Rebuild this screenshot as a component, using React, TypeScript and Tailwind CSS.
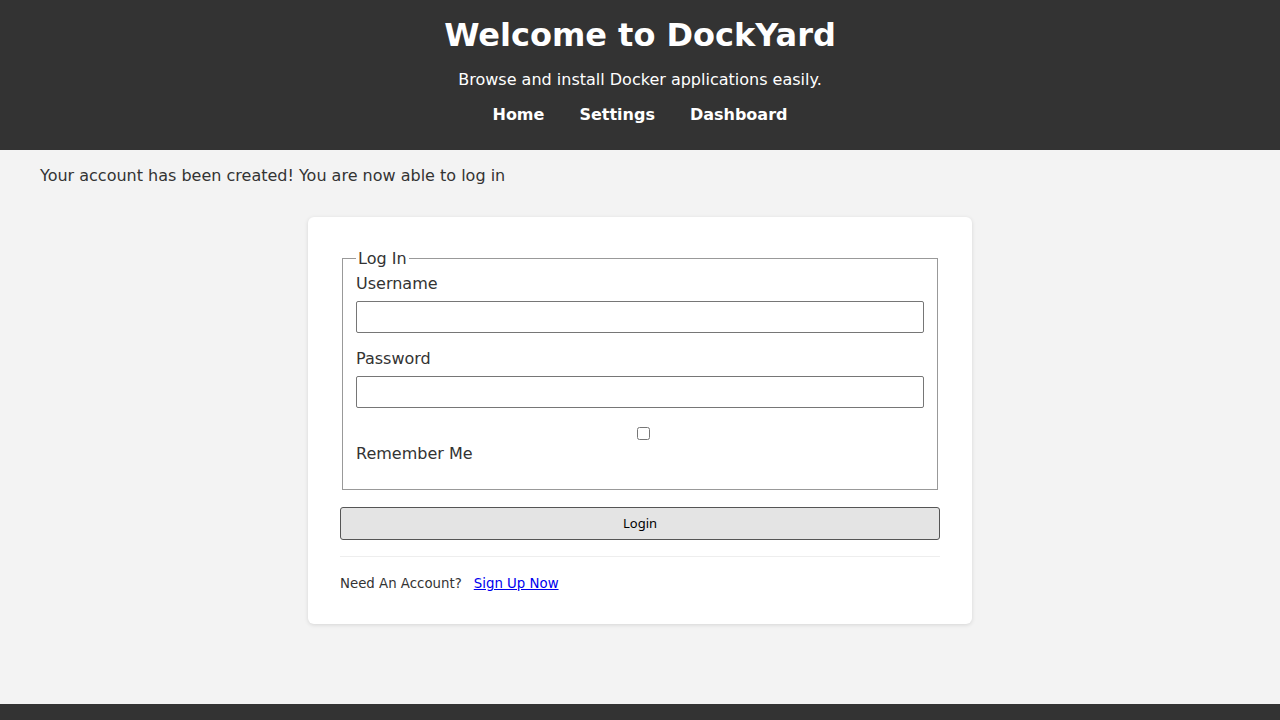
export default function App() {
  return (
    <div className="min-h-screen bg-[#f3f3f3] text-[#333] font-['DejaVu_Sans',sans-serif]">
      <header className="bg-[#333] text-white text-center pt-4 pb-[23px]">
        <h1 className="text-[32px] leading-[38px] font-bold">Welcome to DockYard</h1>
        <p className="mt-[14px] text-base leading-6">Browse and install Docker applications easily.</p>
        <nav className="mt-[11px] flex justify-center gap-[35px] text-base leading-6 font-bold">
          <a href="#">Home</a>
          <a href="#">Settings</a>
          <a href="#">Dashboard</a>
        </nav>
      </header>

      <main className="min-h-[554px] px-10 pt-[14px]">
        <p className="text-base leading-6">Your account has been created! You are now able to log in</p>

        <div className="mx-auto mt-[29px] w-[664px] bg-white rounded-md shadow-[0_1px_4px_rgba(0,0,0,0.12)] p-8">
          <form>
            <fieldset className="mx-[2px] border border-[#999] px-[13px] pb-[23px]">
              <legend className="px-[2px] text-base leading-[19px]">Log In</legend>
              <label className="block text-base leading-6 mt-[4px]">Username</label>
              <input type="text" className="mt-[5px] block w-full h-8 border border-[#767676] rounded-[2px]" />
              <label className="block text-base leading-6 mt-[14px]">Password</label>
              <input type="password" className="mt-[5px] block w-full h-8 border border-[#767676] rounded-[2px]" />
              <div className="mt-[19px] flex justify-center pl-[7px]">
                <input type="checkbox" className="w-[13px] h-[13px]" />
              </div>
              <label className="block text-base leading-6 mt-[2px]">Remember Me</label>
            </fieldset>
            <button
              type="button"
              className="mt-[17px] block w-full h-[33px] bg-[#e4e4e4] border border-[#555] rounded-[3px] text-[13px] text-black font-['Noto_Sans',sans-serif]"
            >
              Login
            </button>
          </form>
          <hr className="mt-4 border-t border-[#eee]" />
          <p className="mt-[17px] text-[13.33px] leading-5 -mb-[2px]">
            Need An Account?
            <a href="#" className="ml-3 text-[#0000ee] underline">Sign Up Now</a>
          </p>
        </div>
      </main>

      <footer className="bg-[#333] h-[60px]" />
    </div>
  )
}
